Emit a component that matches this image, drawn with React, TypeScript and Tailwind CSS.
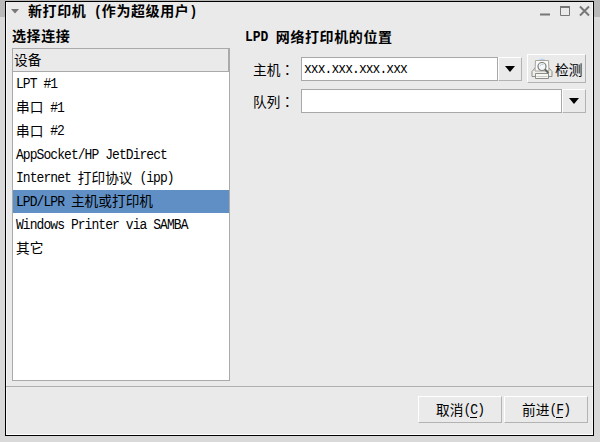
import React from "react";

const CJK = /([\u4e00-\u9fff\uff00-\uffef]+)/;

function Label({ text, bold = false }: { text: string; bold?: boolean }) {
  const parts = text.split(CJK).filter(Boolean);
  return (
    <span className="inline-flex items-center whitespace-pre leading-none">
      {parts.map((p, i) =>
        CJK.test(p) ? (
          <span
            key={i}
            className={
              bold
                ? "font-['Noto_Sans_CJK_SC',sans-serif] text-[14px] font-bold tracking-[0.6px]"
                : p.endsWith("：")
                  ? "font-['Noto_Sans_CJK_TC',sans-serif] text-[13.7px]"
                  : "font-['Noto_Sans_CJK_SC',sans-serif] text-[13.7px]"
            }
          >
            {p}
          </span>
        ) : (
          <span
            key={i}
            className={
              bold
                ? "origin-center translate-y-[1.5px] scale-y-[1.12] font-['Liberation_Mono',monospace] text-[13px] font-bold tracking-[-0.1px]"
                : "origin-center translate-y-[1px] scale-y-[1.12] font-['Liberation_Mono',monospace] text-[13px] tracking-[-0.94px]"
            }
          >
            {p}
          </span>
        ),
      )}
    </span>
  );
}

const devices = [
  "LPT #1",
  "串口 #1",
  "串口 #2",
  "AppSocket/HP JetDirect",
  "Internet 打印协议 (ipp)",
  "LPD/LPR 主机或打印机",
  "Windows Printer via SAMBA",
  "其它",
];

const raised = "border border-t-white border-l-white border-r-[#b3b3b3] border-b-[#b3b3b3] bg-[#eaeaea]";

function TitleBar() {
  return (
    <header className="flex h-[20px] items-start">
      <svg className="mt-[7px] ml-[5px] h-[5px] w-[8px] shrink-0" viewBox="0 0 8 5">
        <path d="M0 0H8L4 4.5Z" fill="#777" />
      </svg>
      <h1 className="ml-[9px] flex h-[16px] items-center">
        <Label text="新打印机 (作为超级用户)" bold />
      </h1>
      <svg className="mt-[3px] mr-[3px] ml-auto h-[12px] w-[50px]" viewBox="0 0 50 12" fill="none" stroke="#777">
        <path d="M0 9.5H10" strokeWidth="2" />
        <path d="M20.5 1.5h9v9h-9z" />
        <path d="M20 2h10" strokeWidth="2" />
        <path d="M40 1.5L49 10.5M49 1.5L40 10.5" strokeWidth="2" />
      </svg>
    </header>
  );
}

function Combo({ value, className }: { value: string; className: string }) {
  return (
    <div className={`flex h-[24px] ${className}`}>
      <div className="flex min-w-0 flex-1 items-center border border-[#a8a8a8] bg-white pl-[2px]">
        <Label text={value} />
      </div>
      <button className={`flex w-[24px] items-center justify-center ${raised}`}>
        <svg className="h-[6px] w-[10px]" viewBox="0 0 10 6">
          <path d="M0 0H10L5 6Z" fill="#000" />
        </svg>
      </button>
    </div>
  );
}

function PrinterIcon() {
  return (
    <svg className="h-[22px] w-[22px] shrink-0" viewBox="0 0 22 22" fill="none">
      <path d="M7 2.5Q11 -1.5 15 2.5V4H7Z" fill="#b9d4f2" />
      <path d="M4 10L1 13.5V18.5H21V13.5L18 10Z" fill="#eeeeea" stroke="#8d8d87" />
      <path d="M4.5 2.5H17.5L18 13H4Z" fill="#fafafa" stroke="#a6a69f" />
      <path d="M4.5 15.5H17.5V20.5H4.5Z" fill="#f6f6f2" stroke="#8d8d87" />
      <path d="M5.5 18.5H16.5" stroke="#cccdc7" />
      <circle cx="11" cy="8.5" r="4" fill="#f5f8fa" stroke="#7d7d78" strokeWidth="1.2" />
      <path d="M9 8Q10 5.5 12.5 6.5" stroke="#c3cbd0" />
      <path d="M14 11.5L17.5 15" stroke="#666660" strokeWidth="2" />
    </svg>
  );
}

function ActionButton({ text, mnemonic }: { text: string; mnemonic: string }) {
  return (
    <button className={`flex h-[27px] w-[84px] items-center justify-center ${raised}`}>
      <Label text={`${text}(`} />
      <span className="flex h-[15px] items-center shadow-[0_1px_#000]">
        <Label text={mnemonic} />
      </span>
      <Label text=")" />
    </button>
  );
}

export default function App() {
  return (
    <div className="h-[442px] w-[600px] bg-linear-to-b from-[#b8b8b8] from-[17px] to-[#d9d9d9] to-[17px] pt-px pl-[5px] text-black">
      <main className="flex h-[435px] w-[589px] flex-col border border-black bg-[#eaeaea] shadow-[inset_1px_0_#f7f7f7,inset_0_-1px_#fff,inset_-1px_0_#f5f5f5]">
        <TitleBar />
        <div className="flex h-[364px] pl-[6px]">
          <section className="w-[218px]">
            <h2 className="flex h-[26px] items-center">
              <Label text="选择连接" bold />
            </h2>
            <div className="h-[333px] border border-[#aaa] bg-white">
              <div className="flex h-[23px] items-center border-r border-b border-[#aaa] bg-[#eaeaea] pl-[1px]">
                <Label text="设备" />
              </div>
              <ul>
                {devices.map((d, i) => (
                  <li
                    key={d}
                    className={`flex h-[23.5px] items-center pl-[3px] ${i === 5 ? "bg-[#5f8fc4]" : ""}`}
                  >
                    <Label text={d} />
                  </li>
                ))}
              </ul>
            </div>
          </section>
          <section className="ml-[15px] w-[342px]">
            <h2 className="flex h-[26px] items-center pt-[1px]">
              <Label text="LPD 网络打印机的位置" bold />
            </h2>
            <div className="mt-[6px] flex h-[29px] items-center">
              <div className="w-[56px] pl-[8px]">
                <Label text="主机：" />
              </div>
              <Combo value="xxx.xxx.xxx.xxx" className="w-[221px]" />
              <button className={`ml-[5px] flex h-[29px] w-[59px] items-center pl-[3px] ${raised}`}>
                <PrinterIcon />
                <span className="ml-[2px]">
                  <Label text="检测" />
                </span>
              </button>
            </div>
            <div className="mt-[6px] flex items-center">
              <div className="w-[56px] pl-[8px]">
                <Label text="队列：" />
              </div>
              <Combo value="" className="w-[285px]" />
            </div>
          </section>
        </div>
        <footer className="flex flex-1 justify-end gap-[2px] border-t border-[#b0b0b0] pt-[9px] pr-[5px]">
          <ActionButton text="取消" mnemonic="C" />
          <ActionButton text="前进" mnemonic="F" />
        </footer>
      </main>
    </div>
  );
}
